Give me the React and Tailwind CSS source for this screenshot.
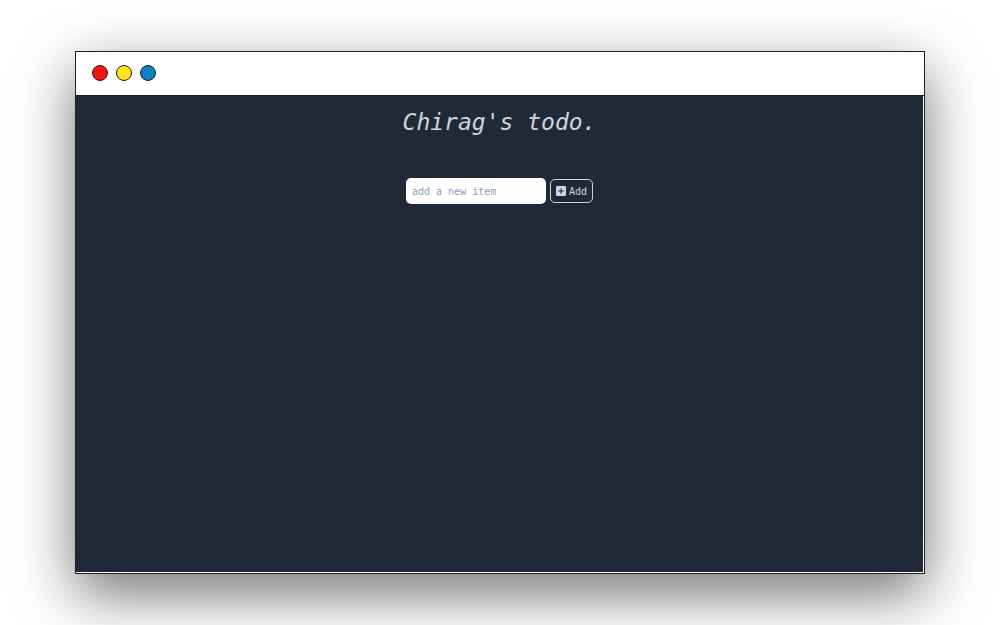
import { useState } from "react";

function AddIcon() {
  return (
    <svg viewBox="0 0 10 10" className="size-[10px] shrink-0" aria-hidden="true">
      <rect width="10" height="10" rx="1.3" fill="#d1d5db" />
      <path d="M5 2.8v4.4M2.8 5h4.4" stroke="#1f2937" strokeWidth="1.1" strokeLinecap="round" />
    </svg>
  );
}

function TitleBar() {
  return (
    <div className="flex h-11 shrink-0 items-center gap-2 border-b border-[#231f20] bg-white px-4 pb-px">
      <span className="size-4 rounded-full border border-[#231f20] bg-[#fb0f0f]" />
      <span className="size-4 rounded-full border border-[#231f20] bg-[#fee21a]" />
      <span className="size-4 rounded-full border border-[#231f20] bg-[#107fc1]" />
    </div>
  );
}

function TodoApp() {
  const [value, setValue] = useState("");
  return (
    <main className="mr-px mb-px flex grow flex-col items-center bg-[#202937] pt-2 text-gray-300">
      <h1 className="text-[23px] leading-9 italic">Chirag's todo.</h1>
      <form
        className="mt-[38px] flex items-center gap-1"
        onSubmit={(e) => {
          e.preventDefault();
          setValue("");
        }}
      >
        <input
          type="text"
          aria-label="New item"
          placeholder="add a new item"
          value={value}
          onChange={(e) => setValue(e.target.value)}
          className="h-[26px] w-[140px] rounded-[5px] bg-white px-1.5 text-[10px] text-gray-800 placeholder:text-[#939cab]"
        />
        <button
          type="submit"
          className="flex h-6 items-center gap-[3px] rounded-[5px] border border-gray-300 px-[5px] text-[10px]"
        >
          <AddIcon />
          Add
        </button>
      </form>
    </main>
  );
}

export default function App() {
  return (
    <div className="flex min-h-screen bg-white px-[75px] py-[51px] font-['DejaVu_Sans_Mono',monospace]">
      <div className="flex grow flex-col border border-[#231f20] bg-white shadow-[0_20px_55px_rgba(0,0,0,0.55)]">
        <TitleBar />
        <TodoApp />
      </div>
    </div>
  );
}
